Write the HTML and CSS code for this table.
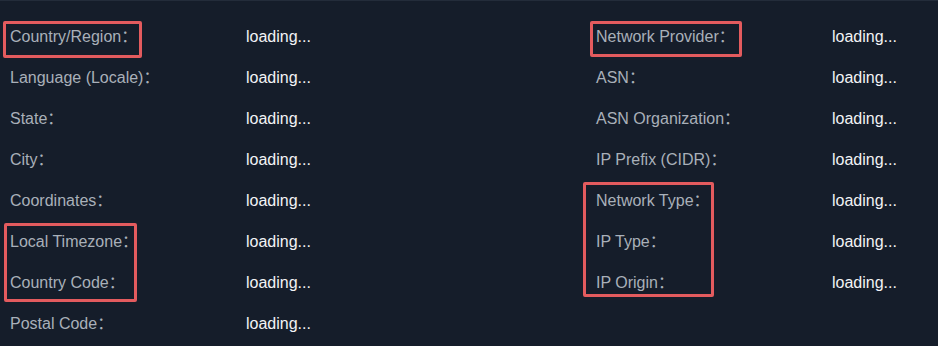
FILE: index.html
```html
<!DOCTYPE html>
<html lang="en">
<head>
    <meta charset="UTF-8">
    <title>IP info</title>
    <link rel="stylesheet" href="styles.css">
</head>
<body>
<div class="info-panel">
    <div class="info-list">
        <div class="info-row"><span class="info-label">Country/Region：</span><span class="info-value">loading...</span></div>
        <div class="info-row"><span class="info-label">Language (Locale)：</span><span class="info-value">loading...</span></div>
        <div class="info-row"><span class="info-label">State：</span><span class="info-value">loading...</span></div>
        <div class="info-row"><span class="info-label">City：</span><span class="info-value">loading...</span></div>
        <div class="info-row"><span class="info-label">Coordinates：</span><span class="info-value">loading...</span></div>
        <div class="info-row"><span class="info-label">Local Timezone：</span><span class="info-value">loading...</span></div>
        <div class="info-row"><span class="info-label">Country Code：</span><span class="info-value">loading...</span></div>
        <div class="info-row"><span class="info-label">Postal Code：</span><span class="info-value">loading...</span></div>
    </div>
    <div class="info-list">
        <div class="info-row"><span class="info-label">Network Provider：</span><span class="info-value">loading...</span></div>
        <div class="info-row"><span class="info-label">ASN：</span><span class="info-value">loading...</span></div>
        <div class="info-row"><span class="info-label">ASN Organization：</span><span class="info-value">loading...</span></div>
        <div class="info-row"><span class="info-label">IP Prefix (CIDR)：</span><span class="info-value">loading...</span></div>
        <div class="info-row"><span class="info-label">Network Type：</span><span class="info-value">loading...</span></div>
        <div class="info-row"><span class="info-label">IP Type：</span><span class="info-value">loading...</span></div>
        <div class="info-row"><span class="info-label">IP Origin：</span><span class="info-value">loading...</span></div>
    </div>

    <div class="mark mark-country"></div>
    <div class="mark mark-provider"></div>
    <div class="mark mark-timezone"></div>
    <div class="mark mark-network"></div>
</div>
</body>
</html>
```
FILE: styles.css
```css
html, body {
    margin: 0;
    height: 100%;
}

body {
    background-color: #151d2a;
    font-family: "Liberation Sans", Arial, "Noto Sans CJK SC", sans-serif;
    font-size: 16px;
}

.info-panel {
    position: relative;
    display: grid;
    grid-template-columns: 586px 1fr;
    padding: 15px 0 0 10px;
    border-top: 1px solid #232c3a;
    height: 100%;
    box-sizing: border-box;
}

.info-row {
    display: flex;
    line-height: 41px;
}

.info-label {
    width: 236px;
    color: #a9b0b9;
}

.info-value {
    color: #f2f3f5;
}

/* annotation boxes */
.mark {
    position: absolute;
    border: 3px solid #e35b5e;
    border-radius: 2px;
}

.mark-country {
    left: 3px;
    top: 20px;
    width: 133px;
    height: 31px;
}

.mark-provider {
    left: 590px;
    top: 20px;
    width: 146px;
    height: 30px;
}

.mark-timezone {
    left: 4px;
    top: 222px;
    width: 127px;
    height: 73px;
}

.mark-network {
    left: 583px;
    top: 181px;
    width: 125px;
    height: 109px;
}
```
